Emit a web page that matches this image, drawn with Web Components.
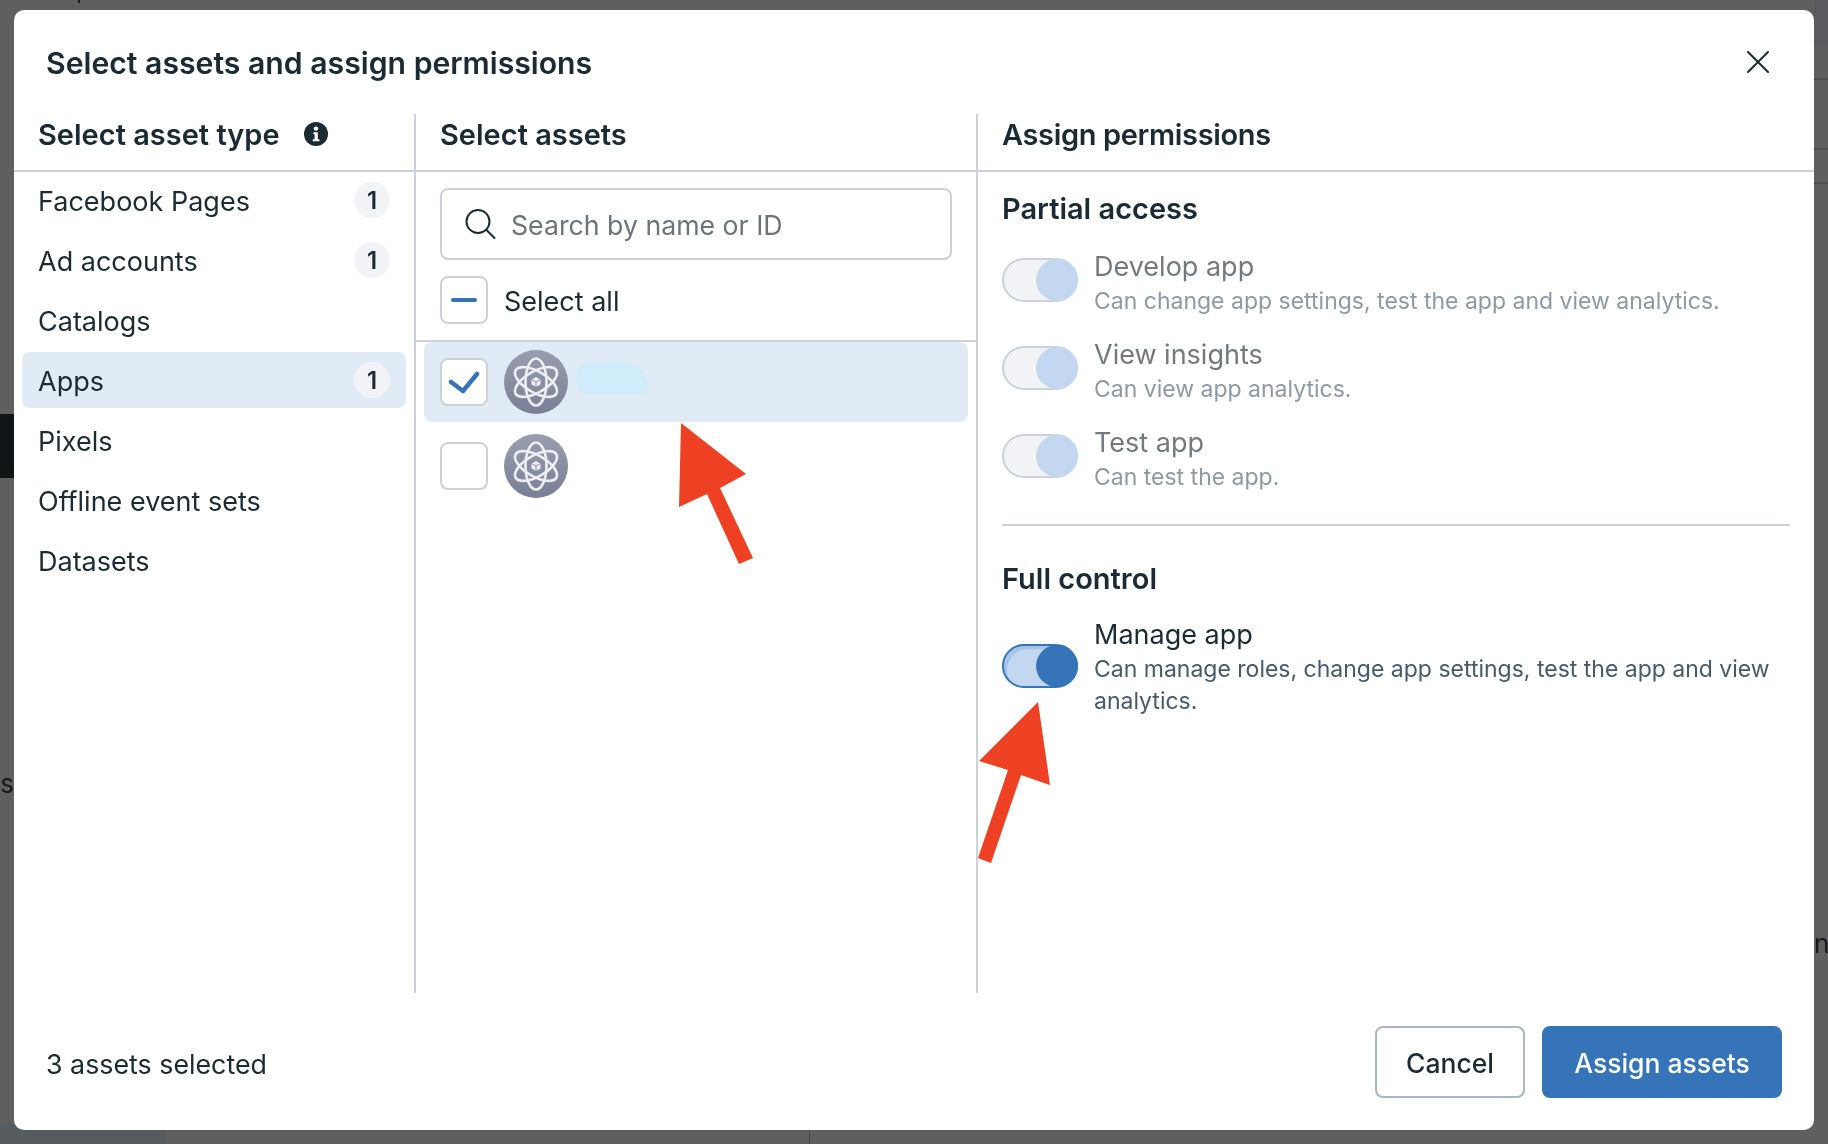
<!DOCTYPE html>
<html lang="en">
<head>
<meta charset="utf-8">
<title>Select assets and assign permissions</title>
<style>
  html, body { margin: 0; height: 100%; }
  body { background: #5f5f60; font-family: Inter, "Noto Sans", sans-serif; color: #1c2b33; overflow: hidden; }
</style>
</head>
<body>
<page-backdrop></page-backdrop>
<assets-dialog heading="Select assets and assign permissions">
  <asset-type-column slot="types">
    <asset-type-row count="1">Facebook Pages</asset-type-row>
    <asset-type-row count="1">Ad accounts</asset-type-row>
    <asset-type-row>Catalogs</asset-type-row>
    <asset-type-row count="1" selected>Apps</asset-type-row>
    <asset-type-row>Pixels</asset-type-row>
    <asset-type-row>Offline event sets</asset-type-row>
    <asset-type-row>Datasets</asset-type-row>
  </asset-type-column>
  <asset-picker-column slot="assets">
    <asset-row checked redacted></asset-row>
    <asset-row></asset-row>
  </asset-picker-column>
  <permissions-column slot="permissions">
    <permission-toggle name="Develop app" disabled>Can change app settings, test the app and view analytics.</permission-toggle>
    <permission-toggle name="View insights" disabled>Can view app analytics.</permission-toggle>
    <permission-toggle name="Test app" disabled>Can test the app.</permission-toggle>
    <permission-toggle slot="full" name="Manage app" on>Can manage roles, change app settings, test the app and view analytics.</permission-toggle>
  </permissions-column>
</assets-dialog>

<script>
// dimmed page that shows around the dialog
class PageBackdrop extends HTMLElement {
  connectedCallback() {
    this.attachShadow({ mode: 'open' });
    this.shadowRoot.innerHTML = `
      <style>
        :host { position: fixed; inset: 0; display: block; overflow: hidden; }
        div, span { position: absolute; }
        .top-right { left: 1814px; right: 0; top: 0; height: 46px; background: #5a5b5e; }
        .rule { left: 1814px; right: 0; height: 2px; background: #505052; }
        .dark { left: 0; top: 414px; width: 14px; height: 64px; background: #101417; }
        .corner { left: 0; bottom: 0; width: 165px; height: 20px; background: #555b5e; }
        .tick { left: 809px; bottom: 0; width: 1px; height: 20px; background: #444; }
        .stem { left: 78px; top: 0; width: 2px; height: 3px; background: #1c1c1c; }
        span { font: 26px Inter, sans-serif; color: #16191b; }
      </style>
      <div class="top-right"></div>
      <div class="rule" style="top:78px"></div>
      <div class="rule" style="top:148px"></div>
      <div class="rule" style="top:182px"></div>
      <div class="dark"></div>
      <div class="corner"></div>
      <div class="tick"></div>
      <div class="stem"></div>
      <span style="left:0;top:768px;width:14px;overflow:hidden;text-align:right;display:block">s</span>
      <span style="left:1814px;top:928px;width:14px;overflow:hidden">n</span>
    `;
  }
}

class AssetsDialog extends HTMLElement {
  connectedCallback() {
    this.attachShadow({ mode: 'open' });
    this.shadowRoot.innerHTML = `
      <style>
        :host {
          position: fixed; left: 14px; top: 10px; width: 1800px; height: 1120px;
          display: flex; flex-direction: column;
          background: #fff; border-radius: 10px; overflow: hidden;
        }
        header {
          height: 104px; flex: none; box-sizing: border-box;
          display: flex; align-items: center; justify-content: space-between;
          padding: 0 32px;
        }
        h1 { margin: 0; padding-top: 2px; font-size: 30.2px; font-weight: 600; color: #1c2b33; }
        .close { width: 22px; height: 22px; margin-right: 13px; }
        .columns { flex: 1; display: grid; grid-template-columns: 402px 562px 1fr; min-height: 0; }
        footer {
          height: 137px; flex: none; box-sizing: border-box;
          display: flex; align-items: center; justify-content: space-between;
          padding: 0 32px;
        }
        .count { font-size: 26.8px; padding-top: 4px; }
        .actions { display: flex; gap: 17px; }
        button {
          height: 72px; border-radius: 8px; font: 500 26.5px Inter, sans-serif; box-sizing: border-box;
          padding: 2px 0 0;
        }
        .cancel { width: 150px; background: #fff; border: 2px solid #a9b6c4; color: #1c2b33; }
        .assign { width: 240px; background: #3674b9; border: 0; color: #fff; }
      </style>
      <header>
        <h1>${this.getAttribute('heading')}</h1>
        <svg class="close" viewBox="0 0 22 22" fill="none" stroke="#1c2b33" stroke-width="2" stroke-linecap="round"><path d="M1 1l20 20M21 1L1 21"/></svg>
      </header>
      <div class="columns">
        <slot name="types"></slot>
        <slot name="assets"></slot>
        <slot name="permissions"></slot>
      </div>
      <footer>
        <span class="count">3 assets selected</span>
        <div class="actions">
          <button class="cancel">Cancel</button>
          <button class="assign">Assign assets</button>
        </div>
      </footer>
    `;
  }
}

const columnHead = `
  .head {
    height: 58px; box-sizing: border-box; border-bottom: 2px solid #cbd2d9;
    display: flex; align-items: center; font-size: 29px; font-weight: 600; color: #1c2b33;
    padding-bottom: 16px;
  }
`;

class AssetTypeColumn extends HTMLElement {
  connectedCallback() {
    this.attachShadow({ mode: 'open' });
    this.shadowRoot.innerHTML = `
      <style>
        :host { display: block; border-right: 2px solid #cbd2d9; }
        ${columnHead}
        .head { padding-left: 24px; gap: 24px; }
        .list { display: flex; flex-direction: column; gap: 4px; padding: 0 8px; }
      </style>
      <div class="head">Select asset type
        <svg width="24" height="24" viewBox="0 0 24 24"><circle cx="12" cy="12" r="12" fill="#1c2b33"/><circle cx="12" cy="6.6" r="2.2" fill="#fff"/><path d="M9.4 10.2h4.4v7h1.6v2H8.8v-2h1.8v-5H9.4z" fill="#fff"/></svg>
      </div>
      <div class="list"><slot></slot></div>
    `;
  }
}

class AssetTypeRow extends HTMLElement {
  connectedCallback() {
    this.attachShadow({ mode: 'open' });
    const count = this.getAttribute('count');
    this.shadowRoot.innerHTML = `
      <style>
        :host {
          display: flex; align-items: center; justify-content: space-between;
          height: 56px; border-radius: 8px; padding: 0 16px; font-size: 27px; color: #1c2b33;
        }
        :host([selected]) { background: #e0ebf6; }
        .label { padding-top: 2px; }
        .badge {
          width: 36px; height: 36px; border-radius: 50%; background: #f1f3f6;
          display: flex; align-items: center; justify-content: center;
          font-size: 24px; font-weight: 600;
        }
      </style>
      <span class="label"><slot></slot></span>
      ${count ? `<span class="badge">${count}</span>` : ''}
    `;
  }
}

const boxStyles = `
  .box {
    width: 48px; height: 48px; box-sizing: border-box; flex: none;
    background: #fff; border: 2px solid #cbd2d9; border-radius: 8px;
    display: flex; align-items: center; justify-content: center;
  }
`;

class AssetPickerColumn extends HTMLElement {
  connectedCallback() {
    this.attachShadow({ mode: 'open' });
    this.shadowRoot.innerHTML = `
      <style>
        :host { display: block; border-right: 2px solid #cbd2d9; position: relative; }
        ${columnHead}
        ${boxStyles}
        .head { padding-left: 24px; }
        .search {
          margin: 16px 24px 0; height: 72px; box-sizing: border-box;
          border: 2px solid #cbd2d9; border-radius: 8px;
          display: flex; align-items: center; gap: 15px; padding-left: 22px;
          font-size: 26.7px; color: #6b737b;
        }
        .search span { padding-top: 2px; }
        .all {
          display: flex; align-items: center; gap: 16px;
          margin-top: 16px; padding: 0 24px 16px; height: 48px;
          border-bottom: 2px solid #cbd2d9; font-size: 27px; color: #1c2b33;
        }
        .all .text { padding-top: 2px; }
        .list { padding: 0 8px; }
        .arrow { position: absolute; left: 263px; top: 309px; }
      </style>
      <div class="head">Select assets</div>
      <div class="search">
        <svg width="32" height="32" viewBox="0 0 32 32" fill="none" stroke="#1c2b33" stroke-width="2" stroke-linecap="round"><circle cx="14" cy="13.5" r="11.5"/><path d="M22.5 22l8 8"/></svg>
        <span>Search by name or ID</span>
      </div>
      <div class="all">
        <span class="box"><svg width="26" height="4"><rect width="26" height="4" rx="2" fill="#3674b9"/></svg></span>
        <span class="text">Select all</span>
      </div>
      <div class="list"><slot></slot></div>
      <svg class="arrow" width="80" height="150" viewBox="0 0 80 150"><path d="M2 0L67 51 41 65 74 135 60 141 28 71 0 84z" fill="#ee4023"/></svg>
    `;
  }
}

class AssetRow extends HTMLElement {
  connectedCallback() {
    this.attachShadow({ mode: 'open' });
    const checked = this.hasAttribute('checked');
    this.shadowRoot.innerHTML = `
      <style>
        :host {
          display: flex; align-items: center; gap: 16px;
          height: 80px; border-radius: 8px; padding: 0 16px; margin-bottom: 4px;
        }
        :host([checked]) { background: #e0ebf6; }
        ${boxStyles}
        .blob { width: 72px; height: 33px; margin: 0 0 7px -8px; background: #d0ebfa; border-radius: 14px 24px 8px 14px; }
      </style>
      <span class="box">${checked ? '<svg width="32" height="24" viewBox="0 0 32 24" fill="none" stroke="#3674b9" stroke-width="4.500" stroke-linecap="round" stroke-linejoin="round"><path d="M3 12l12 9L29 4"/></svg>' : ''}</span>
      <svg width="64" height="64" viewBox="0 0 64 64">
        <defs><linearGradient id="g" x1="0" y1="0" x2="0" y2="1"><stop offset="0" stop-color="#989eae"/><stop offset="1" stop-color="#7a7f96"/></linearGradient></defs>
        <circle cx="32" cy="32" r="32" fill="url(#g)"/>
        <g fill="none" stroke="#eceef0" stroke-width="2.600">
          <ellipse cx="32" cy="32" rx="10.500" ry="23.500"/>
          <ellipse cx="32" cy="32" rx="10.500" ry="23.500" transform="rotate(60 32 32)"/>
          <ellipse cx="32" cy="32" rx="10.500" ry="23.500" transform="rotate(-60 32 32)"/>
        </g>
        <path d="M32 27l4.500 2.500v5L32 37l-4.500-2.500v-5z" fill="#eceef0"/>
        <path d="M27.500 29.500l4.500 2.500 4.500-2.500M32 32v5" fill="none" stroke="#8a8fa2" stroke-width="1"/>
      </svg>
      ${this.hasAttribute('redacted') ? '<span class="blob"></span>' : ''}
    `;
  }
}

class PermissionsColumn extends HTMLElement {
  connectedCallback() {
    this.attachShadow({ mode: 'open' });
    this.shadowRoot.innerHTML = `
      <style>
        :host { display: block; position: relative; }
        ${columnHead}
        .head { padding-left: 24px; letter-spacing: -0.35px; }
        .body { padding: 0 24px; }
        h2 { margin: 0; font-size: 29px; font-weight: 600; color: #1c2b33; line-height: 36px; }
        .partial { padding-top: 19px; }
        .rows { display: flex; flex-direction: column; gap: 20px; margin-top: 22px; }
        hr { border: 0; height: 2px; background: #cbd2d9; margin: 31px 0 35px; }
        .full { margin-top: 20px; }
        .arrow { position: absolute; left: 0; top: 588px; }
      </style>
      <div class="head">Assign permissions</div>
      <div class="body">
        <div class="partial">
          <h2>Partial access</h2>
          <div class="rows"><slot></slot></div>
        </div>
        <hr>
        <h2>Full control</h2>
        <div class="full"><slot name="full"></slot></div>
      </div>
      <svg class="arrow" width="76" height="165" viewBox="0 0 76 165"><path d="M60 0L72 83 43 73 13 161 0 156 30 68 1 59z" fill="#ee4023"/></svg>
    `;
  }
}

class PermissionToggle extends HTMLElement {
  connectedCallback() {
    this.attachShadow({ mode: 'open' });
    this.shadowRoot.innerHTML = `
      <style>
        :host { display: flex; gap: 16px; align-items: center; }
        .track {
          width: 76px; height: 44px; box-sizing: border-box; flex: none; margin-bottom: 6px;
          border: 2px solid #cbd2d9; border-radius: 22px; background: #f1f3f6;
          display: flex; justify-content: flex-end; align-items: center;
        }
        .knob { width: 42px; height: 42px; border-radius: 50%; background: #c3d8f0; margin-right: -2px; }
        :host([on]) .track { margin-bottom: 2px; border-color: #3674b9; background: #c3d8f0; box-shadow: inset 4px 4px 0 -1px #a8c4e8; }
        :host([on]) .knob { background: #3674b9; }
        .name { font-size: 27px; line-height: 36px; color: #1c2b33; }
        .desc { font-size: 23px; line-height: 32px; color: #465a69; }
        :host([disabled]) .name { color: #72797f; }
        :host([disabled]) .desc { color: #8d99a5; }
      </style>
      <div class="track"><div class="knob"></div></div>
      <div>
        <div class="name">${this.getAttribute('name')}</div>
        <div class="desc"><slot></slot></div>
      </div>
    `;
  }
}

customElements.define('page-backdrop', PageBackdrop);
customElements.define('assets-dialog', AssetsDialog);
customElements.define('asset-type-column', AssetTypeColumn);
customElements.define('asset-type-row', AssetTypeRow);
customElements.define('asset-picker-column', AssetPickerColumn);
customElements.define('asset-row', AssetRow);
customElements.define('permissions-column', PermissionsColumn);
customElements.define('permission-toggle', PermissionToggle);
</script>
</body>
</html>
